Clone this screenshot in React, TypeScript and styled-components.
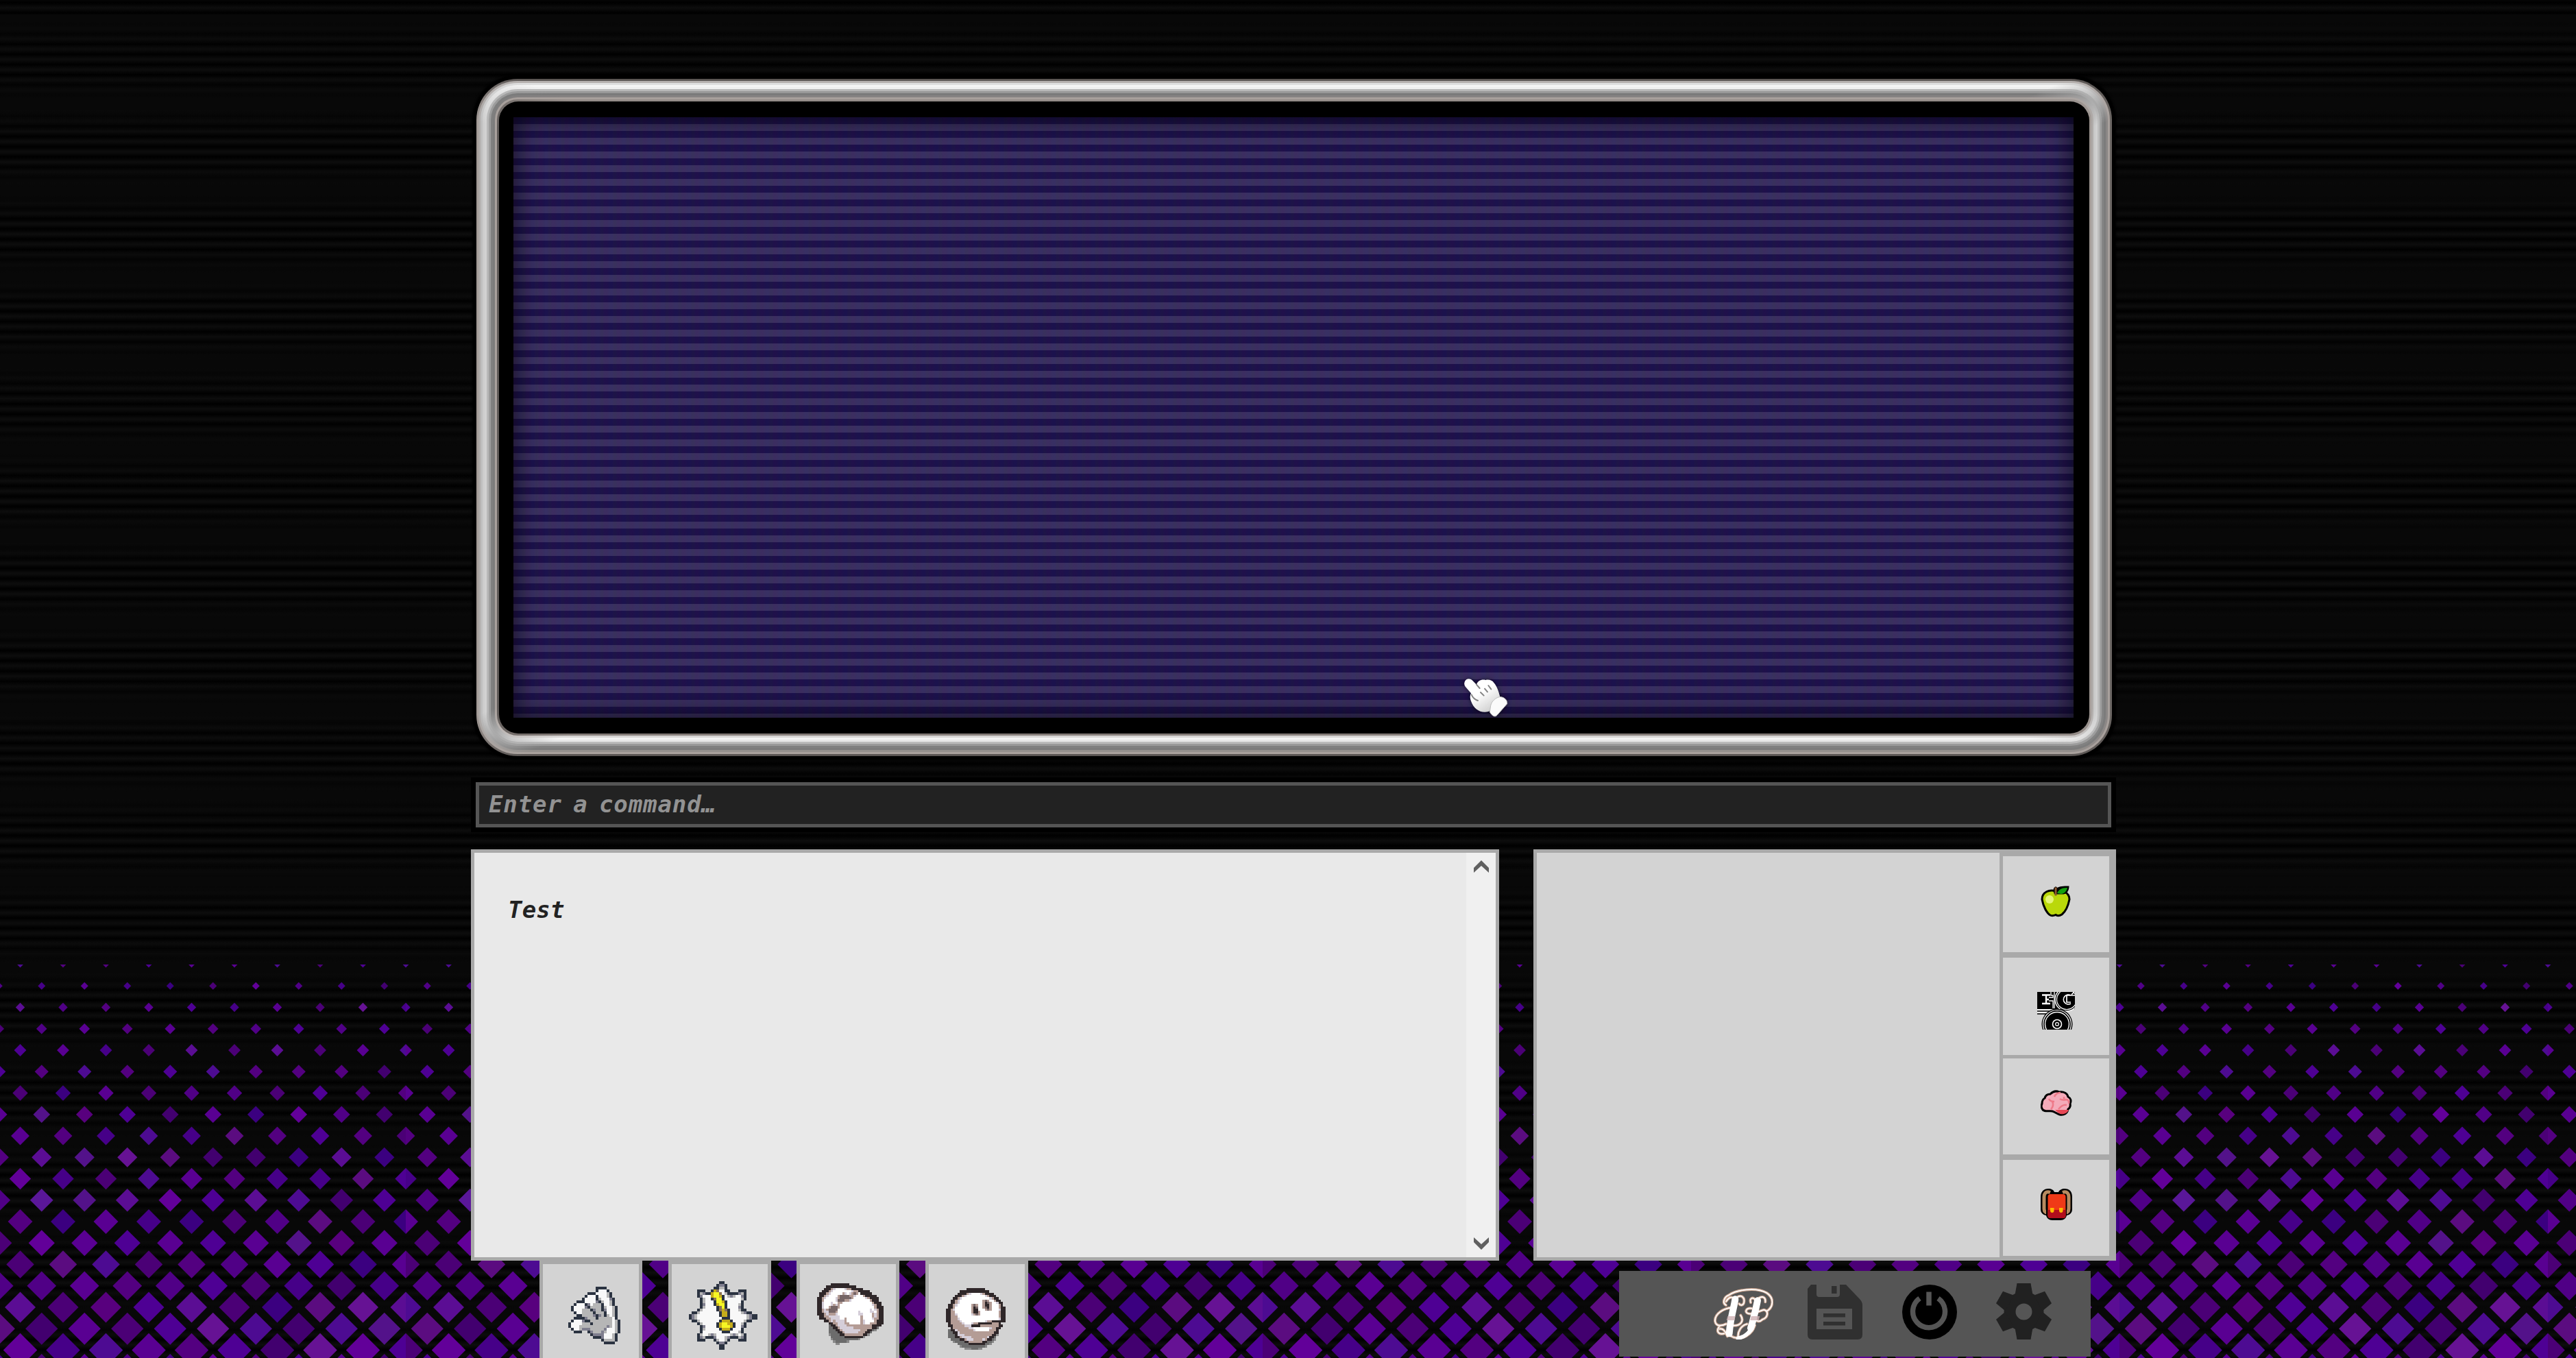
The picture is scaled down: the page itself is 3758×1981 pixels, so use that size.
import React from "react";
import styled, { createGlobalStyle } from "styled-components";

const GlobalStyle = createGlobalStyle`
  html, body { margin: 0; padding: 0; background: #070707; overflow: hidden; }
  * { box-sizing: border-box; }
`;

const pixelFont = `"DejaVu Sans Mono", "Liberation Mono", monospace`;

/* ---------- page ---------- */

const Page = styled.div`
  position: relative;
  isolation: isolate;
  width: 3758px;
  height: 1981px;
  overflow: hidden;
  background:
    repeating-linear-gradient(180deg, #080808 0 10px, rgba(8, 8, 8, 0) 46px 90px, #080808 126px) 0 21px,
    repeating-linear-gradient(180deg, #000 0, #0d0d0d 7.5px, #000 15px) 0 4px;
`;

const Backdrop = styled.svg`
  position: absolute;
  z-index: -1;
  left: 0;
  bottom: 0;
`;

const Main = styled.main`
  display: flex;
  flex-direction: column;
  width: 2400px;
  margin-left: 687px;
  padding-top: 115px;
`;

/* ---------- diamond backdrop ---------- */

const purples: Record<string, string> = {
  a: "#3b0080", b: "#460088", c: "#4e0094", d: "#500086", e: "#590092", f: "#58007e",
  g: "#4b0076", h: "#530080", i: "#5b0d94", j: "#4d0b92", k: "#620099", m: "#42006f",
  n: "#5b0c80", o: "#661294", p: "#53128a", q: "#5a1799",
};

const diamondRows = [
  "jjhhceejgcj", "dbebagkdbm", "cidhecbegob", "gdehehdcdc", "ecebgigigej",
  "chjhcjhhhm", "egaegddgcgh", "epfcmeakdm", "hehbjbnhchg", "hiponmmaia",
  "bkbgjehbbnc", "dqpikcijmc", "ehaebagdnga", "gkececepfe", "ggnjghdecae",
  "ddehdcgbmb", "jigfciganoi", "nmegcojmjp", "gkbjehcmokc", "cgedbkhcem",
];

const TILE = 625;
const STEP = 31.25;

function Diamonds() {
  const shapes: React.ReactNode[] = [];
  diamondRows.forEach((row, n) => {
    const even = n % 2 === 0;
    const r = 4.4 + 1.13 * n;
    const y = n * STEP;
    [...row].forEach((c, i) => {
      const x = even ? i * 62.5 : 31.25 + i * 62.5;
      shapes.push(
        <polygon key={`${n}-${i}`} fill={purples[c]} points={`${x - r},${y} ${x},${y - r} ${x + r},${y} ${x},${y + r}`} />
      );
    });
  });
  return (
    <Backdrop width={3758} height={574} viewBox="0 0 3758 574">
      <defs>
        <pattern id="diamonds" x={-33} y={0} width={TILE} height={640} patternUnits="userSpaceOnUse">
          {shapes}
        </pattern>
      </defs>
      <rect width={3758} height={574} fill="url(#diamonds)" />
    </Backdrop>
  );
}

/* ---------- monitor ---------- */

/* top, right, bottom, left shade of each 3px ring, outermost first */
const ringColors = [
  ["#5a5553", "#6a6562", "#5a5553", "#a39b97"],
  ["#b5b0ae", "#a8a09c", "#a8a09c", "#aeaaa8"],
  ["#dedede", "#8a8685", "#948f8c", "#bfbfbf"],
  ["#f4f4f4", "#7c7c7c", "#7c7c7c", "#cdcdcd"],
  ["#efefef", "#858585", "#808080", "#d2d2d2"],
  ["#b8b8b8", "#a0a0a0", "#9a9a9a", "#b8b8b8"],
  ["#999999", "#bdbdbd", "#bbbbbb", "#9d9d9d"],
  ["#7a7a7a", "#d0d0d0", "#e8e8e8", "#808080"],
  ["#858282", "#c9c9c9", "#f4f4f4", "#7c7c7c"],
  ["#a8a09c", "#b0acaa", "#d8d6d5", "#a8a09c"],
  ["#948c88", "#a39b97", "#857d79", "#5e5957"],
];

const Monitor = styled.section`
  width: 2386px;
  height: 988px;
  margin-left: 8px;
  display: flex;
  border-radius: 60px;
  background: #000;
  box-shadow: 0 0 3px 6px #000;
`;

const Ring = styled.div<{ $colors: string[]; $radius: number }>`
  flex: 1;
  display: flex;
  padding: 3px;
  border-radius: ${(p) => p.$radius}px;
  background: ${({ $colors: [t, r, b, l] }) =>
    `conic-gradient(${t} 66.4deg, ${r} 70deg 110deg, ${b} 113.6deg 246.4deg, ${l} 250deg 290deg, ${t} 293.6deg)`};
`;

const Glass = styled.div`
  flex: 1;
  display: flex;
  padding: 23px 23px 23px 21px;
  border-radius: 28px;
  background: #000;
`;

const Screen = styled.div`
  flex: 1;
  box-shadow: inset 0 0 38px rgba(0, 0, 0, 0.75);
  background:
    repeating-linear-gradient(90deg, rgba(60, 0, 60, 0.09) 0 3px, rgba(0, 20, 90, 0.07) 8px 11px, rgba(30, 40, 30, 0.1) 14px 16px, rgba(60, 0, 60, 0.09) 19px),
    repeating-linear-gradient(180deg, #1d124c 0 10px, #3c3264 10px 20px);
`;

function Bezel({ level = 0, children }: { level?: number; children: React.ReactNode }) {
  if (level === ringColors.length) return <Glass>{children}</Glass>;
  return (
    <Ring $colors={ringColors[level]} $radius={60 - level * 3}>
      <Bezel level={level + 1}>{children}</Bezel>
    </Ring>
  );
}

/* ---------- command line ---------- */

const CommandInput = styled.input`
  width: 2386px;
  height: 66px;
  margin: 38px 0 0 7px;
  padding: 0 0 3px 14px;
  border: 5px solid #555;
  border-radius: 0;
  outline: none;
  background: #222;
  box-shadow: 0 0 0 7px #000;
  color: #929292;
  font: italic bold 34px ${pixelFont};
  letter-spacing: 0.9px;
  word-spacing: -5px;
  &::placeholder { color: #929292; opacity: 1; }
`;

/* ---------- panels ---------- */

const Panels = styled.div`
  display: flex;
  justify-content: space-between;
  height: 600px;
  margin-top: 32px;
`;

const TextPanel = styled.section`
  display: flex;
  width: 1500px;
  border: 5px solid #a9a9a9;
  background: #e9e9e9;
`;

const Story = styled.p`
  flex: 1;
  margin: 0;
  padding: 63px 49px;
  color: #222;
  font: italic bold 34px/40px ${pixelFont};
  letter-spacing: 0.2px;
`;

const ScrollTrack = styled.div`
  display: flex;
  flex-direction: column;
  justify-content: space-between;
  align-items: center;
  width: 43px;
  padding: 11px 0;
  background: #f0f0f0;
`;

const SidePanel = styled.section`
  display: flex;
  width: 850px;
  border: 5px solid #a9a9a9;
  background: #d3d3d3;
`;

const SideBody = styled.div`
  flex: 1;
`;

const SideTabs = styled.nav`
  display: grid;
  grid-template-rows: 140px 142px 140px 140px;
  row-gap: 8px;
  width: 165px;
  padding: 5px;
  background: #a9a9a9;
  & > :nth-child(3) { margin-top: -3px; margin-bottom: 3px; }
  & > :nth-child(4) { margin-top: -3px; margin-bottom: 3px; }
`;

const SideTab = styled.button<{ $dy: number }>`
  display: flex;
  align-items: center;
  justify-content: center;
  padding: ${(p) => (p.$dy > 0 ? p.$dy * 2 : 0)}px 0 ${(p) => (p.$dy < 0 ? -p.$dy * 2 : 0)}px;
  border: 0;
  background: #d3d3d3;
`;

function Chevron({ down }: { down?: boolean }) {
  return (
    <svg width="22" height="18" viewBox="0 0 22 18">
      <path fill="#606060" d={down ? "M0 0v7l11 11 11-11V0L11 10z" : "M0 18v-7L11 0l11 11v7L11 8z"} />
    </svg>
  );
}

function Apple() {
  return (
    <svg width="45" height="46" viewBox="0 0 45 46">
      <path fill="#bad80a" stroke="#000" strokeWidth="3" d="M22 8C13 5 2 9 2 20c2 11 7 20 12 23 3 1.500 5 1 8-.5 3 2 6 1.500 9-.5 5-4 9-12 11-22 0-6-3-9-7-11C32 7 26 7 22 8z" />
      <ellipse cx="13" cy="20" rx="6" ry="6" fill="#e4f577" />
      <path d="M18.500 8c0-7 4-8 6-5 3-2 8-2.500 17-2.500 0 7-3 11-8 12H20z" fill="#000" />
      <path d="M24 11c2-5 6-8 15-8-1 5-5 9-9 9z" fill="#13a10e" />
      <path d="M20.500 2.500h3v12h-3z" fill="#8e562e" />
    </svg>
  );
}

function Ego() {
  return (
    <svg width="55" height="55" viewBox="0 0 55 55">
      <rect width="55" height="25" fill="#000" />
      <path d="M0 26h22M0 30h18" stroke="#fff" strokeWidth="1.600" />
      <path d="M0 28h20M0 32h16" stroke="#000" strokeWidth="1.400" />
      <path d="M7 4.500h12M7 17h12M13 4.500v12.500M13 11h4" stroke="#fff" strokeWidth="2.400" fill="none" />
      <path d="M20 0v5h3v3h-6M17 13h6v11M25 0v24" stroke="#fff" strokeWidth="1.300" fill="none" />
      <circle cx="43" cy="11" r="17" fill="#000" stroke="#fff" strokeWidth="1.400" />
      <circle cx="43" cy="11" r="14.500" fill="#000" stroke="#fff" strokeWidth="1.200" />
      <path d="M49 5a7 7 0 1 0 0 12M43 5v10h6M42 5h13M50 4l4-4" stroke="#fff" strokeWidth="1.700" fill="none" />
      <svg x="0" y="25" width="55" height="30" viewBox="0 25 55 30">
        <circle cx="29" cy="47" r="22.500" fill="#000" />
        <circle cx="29" cy="47" r="20.500" fill="none" stroke="#fff" strokeWidth="1.200" />
        <circle cx="29" cy="47" r="17.500" fill="none" stroke="#fff" strokeWidth="1.400" />
        <circle cx="29" cy="47" r="6.500" fill="none" stroke="#fff" strokeWidth="1.600" />
        <circle cx="29" cy="47" r="2.400" fill="none" stroke="#fff" strokeWidth="1.200" />
      </svg>
    </svg>
  );
}

function Brain() {
  return (
    <svg width="46" height="39" viewBox="0 0 46 39">
      <path fill="#f4abba" stroke="#000" strokeWidth="3" d="M2 20c0-5 2-7 4-8 1-4 4-6 8-6 4-4 9-5 13-3 7-1 12 2 13 7 4 2 5 6 3 10 1 4 0 6-3 8-1 6-6 9-12 8-4-1-7-4-11-5-5-1-13 2-15-4-1-2-1-5 0-7z" />
      <path fill="#e74856" d="M21 29h20c-2 5-7 7-12 6-3-1-5-3-8-6z" />
      <path fill="none" stroke="#ee7a89" strokeWidth="2.500" d="M12 13c2 4 5 4 8 4m-3 0c2 4 1 8-2 11M20 10c2-5 6-6 9-6M28 13c3 2 5 2 9 1 3 0 5 3 4 6M34 13v-3M26 28c4-5 8-7 12-6" />
    </svg>
  );
}

function Backpack() {
  return (
    <svg width="46" height="46" viewBox="0 0 46 46">
      <path fill="#000" d="M0 12C0 4 5 0 11 0c5 0 8 2 9 5h6c1-3 5-5 9-5 7 0 11 4 11 12v18c0 5-3 8-8 9-1 4-4 7-9 7H17c-5 0-8-3-9-7-5-1-8-4-8-9z" />
      <path fill="none" stroke="#b78b60" strokeWidth="5" d="M14 5.500C7 3 5 8 5 12v17c0 4 2 6 5 6M32 5.500c7-2.500 9 2.500 9 6.500v17c0 4-2 6-5 6" />
      <path fill="#000" d="M8 9h30v30H8z" />
      <rect x="10.500" y="8" width="26" height="35" rx="4" fill="#f03a17" />
      <path fill="#b10e1c" d="M10.500 31h26v8q0 4-4 4h-18q-4 0-4-4z" />
      <path fill="#ffb900" d="M14 28h5.500v4q0 3-2.700 3T14 32zM27 28h5.500v4q0 3-2.700 3T27 32z" />
    </svg>
  );
}

/* ---------- pixel art ---------- */

function PixelArt({ rows, palette, size }: { rows: string[]; palette: Record<string, string>; size: number }) {
  const w = Math.max(...rows.map((r) => r.length));
  const h = rows.length;
  return (
    <svg width={w * size} height={h * size} viewBox={`0 0 ${w} ${h}`} shapeRendering="crispEdges">
      {rows.flatMap((row, y) =>
        [...row].map((c, x) => (c === "." ? null : <rect key={`${x}-${y}`} x={x} y={y} width="1" height="1" fill={palette[c]} />))
      )}
    </svg>
  );
}

const coolPalette = { K: "#2b3341", W: "#f8f8f8", G: "#b6b6b6", D: "#7f7e8e", O: "#c6ad1b", Y: "#f6f623", B: "#8b7355" };
const warmPalette = { K: "#2f2729", W: "#ffffff", L: "#d5ced9", T: "#b49c95", B: "#756566", S: "#6c6c6c", s: "#8a8a8a" };

const handRows = [
  "..........KKKK.....",
  "..........KWWWK....",
  ".......KKKWWWWGK...",
  "......KWWWKWWWGK...",
  ".....KWWWWKGWWWDK..",
  "...KKKWWWWDKGWWGK..",
  "..KWWWKDWGGGKWWGK..",
  ".KWWWWDKGGGGKGWWGK.",
  ".KWWWGGGKDGGKDWWGK.",
  "..KWWGGGGKGGGKWWGK.",
  "...KKGGGGDKDGKGWGK.",
  "..KKKKDGGGKGGGGGWK.",
  ".KWWWDKKGGGGGGGGWGK",
  "KWWWWGGGKGGGGGGGWGK",
  "KWWWGGGGGGGGGGDGWGK",
  ".KWWGDDDGGGGGDWWWGK",
  "..KKK..KDGGGDGWWWGK",
  "........KDDDDWWWGK.",
  ".........KKKDWWWGK.",
  "............KGGGGK.",
  ".............KKKK..",
];

const burstRows = [
  "...........KK............",
  "..........KDDK...........",
  ".........KKGGK...........",
  "...KKK..KOBWWKK...KKK....",
  "...KGDKKOYYBWGKKKKDGK....",
  "...KDWWWOYYOKWGDGWWDK....",
  "....KGWWKBYYKWWWWWWGK....",
  "....KGWWWKYYOKWWWWWK.....",
  "....KDWWWKOYYKWWWWGK.....",
  "....KGWWWWKBYKWWWWDK.....",
  "...KGWWWWWKBOBKWWWGKK....",
  ".KKGWWWWWWWKOOKWWWWGDKK..",
  "KDGWWWWWWWWKOOKWWWWWWGDKK",
  "KDGWWWWWWWWWKKKWWWWWWGDKK",
  ".KKGWWWWWWWKOOOKWWWWGKK..",
  "...KGWWWWWKOYYOOKWWGK....",
  "....KDWWWWKOYYYOKWWDK....",
  "....KGWWWWWKOOOKWWWK.....",
  "....KWWWWWWWKKKWWWGK.....",
  "...KGWWGDGWWWWWGDGWGK....",
  "...KDGKKKDWWWGDKKKGDK....",
  "...KKK...KGWWGK...KKK....",
  "..........KDDK...........",
  "...........KK............",
  "...........KK............",
];

const fistRows = [
  "......KKKKKKKK...............",
  "....KKKKKKKKKKKKK............",
  "...KKKTLWWWWLTTKKKKK.........",
  "..KKKTLWWWWWWWWLTTKKKKK......",
  ".KKKTLWWWWWTLWLTBTWKKKKK.....",
  ".KKTLWWWWTBBBBTTLWWWTKKKKK...",
  "KKTLWWWWLTBBBBBTWWWWWLTKKKK..",
  "KKTWWWWWLBBBTTLWWWWWWWWTKKK..",
  "KKLWWWLWWTTWWWWWWWWWWWWWTKKK.",
  "KKLWWWLTLTWWWWWWWWWWWWWWLTKK.",
  "KKLWWTBBBTWWWWWWWWWWWWWWWTKKK",
  "KKTLTBBBBWWWWWWWWWWWWWWLWLTKK",
  "KKTLLBBBTWWWWWWWWWLWWWWLLWTKK",
  "KKKTLTTTLWWWWWWWWWLLWWWWTLTKK",
  ".KKTTLLLLLWWWWWWWWWTWWWWTLTKK",
  ".KKKTTLLLLWWTWWWWWWTWWWWLTTKK",
  "...KKTLTLLLLTWWWWWWTLWWWWTKKK",
  ".....KKTTLLLTTWWWWWTLWWTTTKKK",
  ".....SKKTLLLLTTTTTTTTTTTKKKK.",
  ".....SSKKTLLLLLLTTTTTTTTKKS..",
  ".....SSSKKTLLLLLLLLTTTKKSs...",
  ".....SSSSKKTLLLLLLTTTKKS.....",
  ".....sSSSSKKTTTTTTTTKKs......",
  "......SSSSSSKKKKKKKKs........",
  "......sSSSSSSSSSSSs..........",
  ".......sSSSSSs..............",
  "........ss...................",
];

const faceRows = [
  ".........KKKKKKKK.........",
  "......KKKKKKKKKKKKK.......",
  ".....KKKKTLWWWWLTKKKK.....",
  "....KKKTLWWWWWWWWLTKKK....",
  "...KKTLWWWWWWWWWWWWLTKK...",
  "..KKTLWWWWWWWWWWTBTWWTKK..",
  "..KKTLWWWWWWWWWWTKBTWWLKK.",
  ".KKTLWWWWWWTBTWWTKKTWWWTK.",
  ".KKTWWWWWWWTKBWWTBKTWWWTKK",
  "KKTLWWWWWWWTKKWWWTBTWWWLKK",
  "KKTTWWWWWWWTKKTWWWWWWWWTKK",
  "KKTTLWWWWWWLTBTWWWWWWWWTKK",
  "KKTTTWWWWWWWWWWWWWWWWWWTKK",
  "KKTTTLWWWWWWWWWWWWWWWWWLKK",
  "KKTTTTLWWWWWWWWWWLTTKKKKKK",
  ".KTTTTTLWWWLTTKKKKKKTTTK..",
  ".KKTTTTTLLLKKKKTTTTTTTTKK.",
  "..KTTTTTTTLLWWWWWWWLTTKK..",
  ".SKKLTTTTTTTLWWWWWWTTTK...",
  ".SSKKLTTTTTTTTTTTTTTTKK...",
  ".SSSKLLLTTTTTTTTTTTTKKs...",
  ".SSSKKTLLLLTTTTTTTLKKS....",
  "..SSSSKKTLLLTTTTLTKKSs....",
  "...sSSSSKKTTTTTTKKSSs.....",
  ".....SSSSSKKKKKKKSSs......",
  "......sSSSSSSSSSSs........",
  "........sssSSSss..........",
];

/* ---------- bottom bar ---------- */

const Footer = styled.footer`
  display: flex;
  justify-content: space-between;
  align-items: flex-start;
  height: 142px;
  padding: 0 37px 0 100px;
`;

const ActionTabs = styled.nav`
  display: flex;
  gap: 37.67px;
`;

const ActionTab = styled.button`
  display: flex;
  align-items: flex-start;
  width: 150px;
  height: 150px;
  padding: 0;
  border: 5px solid #a9a9a9;
  background: #d3d3d3;
`;

const TabArt = styled.span<{ $x: number; $y: number }>`
  display: block;
  padding: ${(p) => p.$y}px 0 0 ${(p) => p.$x}px;
  line-height: 0;
`;

const Toolbar = styled.div`
  display: grid;
  grid-template-columns: 137px 138px 137px 81px;
  align-items: end;
  justify-content: end;
  width: 688px;
  height: 125px;
  margin-top: 15px;
  padding: 0 57px 25px 0;
  background: #555;
`;

const ToolButton = styled.button`
  display: block;
  padding: 0;
  border: 0;
  background: none;
  line-height: 0;
  text-align: left;
`;

function Monogram() {
  const loops =
    "M84 102C66 92 76 66 96 58C130 34 215 22 262 48C298 72 290 112 262 128 M120 72C104 60 92 74 84 86M132 68C150 54 168 68 162 92C158 104 146 104 142 96 M192 90C186 72 200 66 210 76M226 72C244 60 258 66 256 88 M112 112C70 116 34 140 36 172C40 200 74 190 84 184 M54 196C40 216 50 232 76 226M56 206C68 202 80 212 90 238 M108 190C150 196 164 170 148 146M196 116C172 112 164 132 180 138C200 146 226 128 250 122C272 128 268 156 244 164C228 180 210 170 214 156 M96 226C110 250 150 250 174 236C200 220 204 206 210 190M176 184C150 190 132 220 138 246";
  return (
    <svg width="87" height="75" viewBox="30 27 261 225">
      <g fill="none" strokeLinecap="round" strokeLinejoin="round">
        <path d={loops} stroke="#d0aa95" strokeWidth="12" />
        <path d={loops} stroke="#fff" strokeWidth="5" />
        <path d="M124 76C120 110 104 150 98 226" stroke="#fff" strokeWidth="30" />
        <path d="M222 78C214 120 206 160 196 198C188 224 160 244 136 246" stroke="#fff" strokeWidth="17" />
        <path d="M222 82C214 120 206 160 192 202" stroke="#fff" strokeWidth="30" />
      </g>
      <path fill="#cfb1b4" opacity=".8" d="M91 150h34l-4 18H86zM194 150h38l-5 18h-37z" />
    </svg>
  );
}

function SaveIcon() {
  return (
    <svg width="80" height="80" viewBox="0 0 80 80">
      <path fill="#303030" fillRule="evenodd" d="M5 0h8v14q0 4 4 4h26q4 0 4-4V0h9l20 21q4 4 4 9v43q0 7-7 7H7q-7 0-7-7V6zM13 35v30h52V35z" />
      <path fill="#303030" d="M35 2h7.500v11H35zM23 42h32v5.500H23zM23 54h32v5.500H23z" />
    </svg>
  );
}

function PowerIcon() {
  return (
    <svg width="80" height="80" viewBox="0 0 80 80">
      <circle cx="40" cy="40" r="40" fill="#000" />
      <path fill="none" stroke="#555" strokeWidth="7.500" d="M25.500 20a23.500 23.500 0 1 0 27 0M39 10.500v20" />
    </svg>
  );
}

function GearIcon() {
  const teeth = [0, 60, 120, 180, 240, 300];
  return (
    <svg width="81" height="82" viewBox="0 0 81 82">
      <path
        fill="#212121"
        fillRule="evenodd"
        d="M40.500 12a29 29 0 1 0 0 58 29 29 0 1 0 0-58zm0 17.500a12 12 0 1 1 0 24 12 12 0 1 1 0-24z"
      />
      {teeth.map((a) => (
        <path key={a} fill="#212121" transform={`rotate(${a} 40.500 41)`} d="M30.500 0h20l3 17h-26z" />
      ))}
    </svg>
  );
}

/* ---------- pointer ---------- */

const Pointer = styled.svg`
  position: absolute;
  left: 2132px;
  top: 986px;
  filter: drop-shadow(0 0 3px rgba(0, 0, 0, 0.6));
`;

function GlovePointer() {
  return (
    <Pointer width="70" height="66" viewBox="0 0 210 198">
      <defs>
        <linearGradient id="glove" x1="0" y1="0" x2=".7" y2="1">
          <stop offset=".5" stopColor="#fff" />
          <stop offset="1" stopColor="#cfcfcf" />
        </linearGradient>
      </defs>
      <path fill="url(#glove)" d="M16 22C24 8 42 12 50 22L66 38C72 20 88 14 106 18C120 14 136 20 142 30C156 46 164 70 170 96C166 120 148 146 118 156C84 164 54 146 42 110C36 96 38 84 42 76L18 48Q8 36 16 22z" />
      <path fill="#fbfbfb" stroke="#bdbdbd" strokeWidth="3" d="M128 130C132 110 150 96 166 92C184 90 202 104 200 122L156 172C146 184 132 172 124 158z" />
      <path fill="none" stroke="#858585" strokeWidth="6" strokeLinecap="round" d="M66 38l14 16M84 72l14 14M102 56l12 14M118 42l12 16M44 82c6 14 16 22 28 26" />
    </Pointer>
  );
}

/* ---------- app ---------- */

export default function App() {
  return (
    <Page>
      <GlobalStyle />
      <Diamonds />
      <Main>
        <Monitor>
          <Bezel>
            <Screen />
          </Bezel>
        </Monitor>
        <CommandInput placeholder="Enter a command…" />
        <Panels>
          <TextPanel>
            <Story>Test</Story>
            <ScrollTrack>
              <Chevron />
              <Chevron down />
            </ScrollTrack>
          </TextPanel>
          <SidePanel>
            <SideBody />
            <SideTabs>
              <SideTab $dy={-4}><Apple /></SideTab>
              <SideTab $dy={6}><Ego /></SideTab>
              <SideTab $dy={-5}><Brain /></SideTab>
              <SideTab $dy={-5}><Backpack /></SideTab>
            </SideTabs>
          </SidePanel>
        </Panels>
        <Footer>
          <ActionTabs>
            <ActionTab><TabArt $x={37} $y={33}><PixelArt rows={handRows} palette={coolPalette} size={4} /></TabArt></ActionTab>
            <ActionTab><TabArt $x={25} $y={25}><PixelArt rows={burstRows} palette={coolPalette} size={4} /></TabArt></ActionTab>
            <ActionTab><TabArt $x={25} $y={28}><PixelArt rows={fistRows} palette={warmPalette} size={3.34} /></TabArt></ActionTab>
            <ActionTab><TabArt $x={25} $y={35}><PixelArt rows={faceRows} palette={warmPalette} size={3.34} /></TabArt></ActionTab>
          </ActionTabs>
          <Toolbar>
            <ToolButton><Monogram /></ToolButton>
            <ToolButton><SaveIcon /></ToolButton>
            <ToolButton><PowerIcon /></ToolButton>
            <ToolButton><GearIcon /></ToolButton>
          </Toolbar>
        </Footer>
      </Main>
      <GlovePointer />
    </Page>
  );
}
